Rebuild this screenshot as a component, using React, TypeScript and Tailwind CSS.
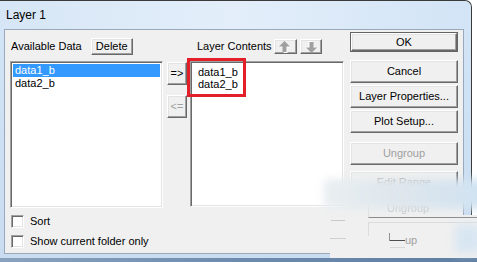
import React from "react";

const font = { fontFamily: '"Liberation Sans", Arial, sans-serif' };

function Btn({
  children,
  className = "",
  disabled = false,
}: {
  children?: React.ReactNode;
  className?: string;
  disabled?: boolean;
}) {
  return (
    <div
      className={
        "flex items-center justify-center bg-[#f0f0f0] border border-t-white border-l-white border-b-[#696969] border-r-[#696969] shadow-[inset_-1px_-1px_0_#a0a0a0,inset_1px_1px_0_#e3e3e3] text-[11px] leading-none " +
        (disabled ? "text-[#a0a0a0] " : "text-black ") +
        className
      }
    >
      {children}
    </div>
  );
}

function Arrow({ down = false }: { down?: boolean }) {
  const pts = "5.5,0 11,5.5 7.5,5.5 7.5,11 3.5,11 3.5,5.5 0,5.5";
  return (
    <svg width="12" height="12" viewBox="0 0 12 12" className={down ? "rotate-180" : ""}>
      <polygon points={pts} fill="#ffffff" transform="translate(1,1)" />
      <polygon points={pts} fill="#a0a0a0" />
    </svg>
  );
}

function Check({ label }: { label: string }) {
  return (
    <div className="flex items-center h-[13px]">
      <div className="w-[13px] h-[13px] bg-white border border-t-[#a0a0a0] border-l-[#a0a0a0] border-b-white border-r-white shadow-[inset_1px_1px_0_#696969,inset_-1px_-1px_0_#e3e3e3]" />
      <span className="ml-[6px] text-[11px] leading-none text-black">{label}</span>
    </div>
  );
}

function ListBox({ className = "", children }: { className?: string; children?: React.ReactNode }) {
  return (
    <div
      className={
        "bg-white border border-t-[#a0a0a0] border-l-[#a0a0a0] border-b-white border-r-white shadow-[inset_1px_1px_0_#696969,inset_-1px_-1px_0_#e3e3e3] p-[2px] " +
        className
      }
    >
      {children}
    </div>
  );
}

export default function App() {
  return (
    <div className="relative w-[477px] h-[262px] overflow-hidden bg-white" style={font}>
      <div className="w-[472px] h-[258px] flex flex-col border-t border-r border-[#3a3a3a] rounded-tr-[7px] bg-gradient-to-b from-[#d3e5f7] to-[#c9dcf0]">
        {/* title bar */}
        <div className="h-[28px] flex items-center pl-[6px] bg-gradient-to-r from-[#d6e6f6] via-[#e3eefa] to-[#d2e4f6] rounded-tr-[7px]">
          <span className="text-[12px] text-black leading-none">Layer 1</span>
        </div>
        {/* client */}
        <div className="ml-[4px] mr-[7px] h-[225px] bg-[#f0f0f0] border border-[#9aa9ba] flex">
          <div className="flex flex-col pl-[5px]">
            <div className="flex items-start">
              {/* col A */}
              <div className="flex flex-col w-[153px] mt-[8px]">
                <div className="flex items-center h-[17px]">
                  <span className="ml-[1px] text-[11px] leading-none text-black">Available Data</span>
                  <Btn className="ml-[9px] w-[42px] h-[17px]">Delete</Btn>
                </div>
                <ListBox className="mt-[6px] h-[147px]">
                  <div className="h-[13px] bg-[#3399ff] text-white text-[11px] leading-[13px] pl-[2px]">data1_b</div>
                  <div className="h-[13px] text-black text-[11px] leading-[13px] pl-[2px]">data2_b</div>
                </ListBox>
              </div>
              {/* col B */}
              <div className="flex flex-col ml-[4px] w-[20px] mt-[32px]">
                <Btn className="h-[23px] w-[20px]">=&gt;</Btn>
                <Btn disabled className="h-[23px] w-[20px] mt-[10px]">&lt;=</Btn>
              </div>
              {/* col C */}
              <div className="flex flex-col ml-[3px] w-[154px] mt-[8px]">
                <div className="flex items-center h-[17px]">
                  <span className="ml-[7px] text-[11px] leading-none text-black">Layer Contents</span>
                  <Btn className="ml-[2px] w-[23px] h-[15px]">
                    <Arrow />
                  </Btn>
                  <Btn className="ml-[3px] w-[22px] h-[15px]">
                    <Arrow down />
                  </Btn>
                </div>
                <ListBox className="relative mt-[6px] h-[146px]">
                  <div className="h-[12px] text-black text-[11px] leading-[12px] pl-[5px] mt-[2px]">data1_b</div>
                  <div className="h-[12px] text-black text-[11px] leading-[12px] pl-[5px]">data2_b</div>
                  <div className="absolute left-[-4px] top-[-4px] w-[59px] h-[39px] border-[3px] border-[#e3202a]" />
                </ListBox>
              </div>
            </div>
            <div className="flex flex-col mt-[7px] pl-[1px] gap-[7px]">
              <Check label="Sort" />
              <Check label="Show current folder only" />
            </div>
          </div>
          {/* col D */}
          <div className="flex flex-col ml-[6px] w-[108px] mt-[2px]">
            <div className="h-[20px] border border-[#646464]">
              <Btn className="h-full w-full">OK</Btn>
            </div>
            <Btn className="mt-[8px] h-[23px]">Cancel</Btn>
            <Btn className="mt-[2px] h-[23px]">Layer Properties...</Btn>
            <Btn className="mt-[2px] h-[23px]">Plot Setup...</Btn>
            <Btn disabled className="mt-[9px] h-[23px]">Ungroup</Btn>
            <Btn disabled className="mt-[6px] h-[23px] items-start pt-[5px]">Edit Range</Btn>
          </div>
        </div>
      </div>
      <div className="h-[4px] w-full bg-gradient-to-r from-[#8aa2bf] via-[#6d8bae] to-[#5f7fa3]" />

      {/* ghost / blurred artefacts */}
      <div className="absolute left-[330px] top-[215px] w-[147px] h-[43px] bg-[#f0f0f0]" />
      <div className="absolute left-[368px] top-[199px] w-[109px] h-[19px] border-l border-b border-l-[#e0e0e0] border-b-[#8a8a8a]">
        <span className="absolute left-[18px] top-[4px] text-[11px] leading-none text-[#c4c4c4] blur-[0.6px]">Ungroup</span>
      </div>
      <div className="absolute left-[368px] top-[222px] w-[109px] h-[14px] border-l border-t border-[#dcdcdc]" />
      <div className="absolute left-[331px] top-[220px] w-[14px] h-px bg-[#c8c8c8]" />
      <div className="absolute left-[330px] top-[238px] w-[16px] h-px bg-[#d0d0d0]" />
      <div className="absolute left-[389px] top-[233px] w-px h-[8px] bg-[#909090]" />
      <div className="absolute left-[390px] top-[240px] w-[15px] h-px bg-[#505050]" />
      <div className="absolute left-[390px] top-[247px] w-[15px] h-px bg-[#d8d8d8]" />
      <span className="absolute left-[405px] top-[235px] text-[11px] leading-none text-[#a0a0a0]">up</span>
      <div className="absolute left-[455px] top-[225px] w-[26px] h-[28px] bg-[#d8e6f2] blur-[5px]" />
      <div className="absolute left-[324px] top-[179px] w-[165px] h-[30px] bg-gradient-to-r from-[#e9eef1] via-[#dde6ec] to-[#cfe2f2] blur-[4px]" />
    </div>
  );
}
